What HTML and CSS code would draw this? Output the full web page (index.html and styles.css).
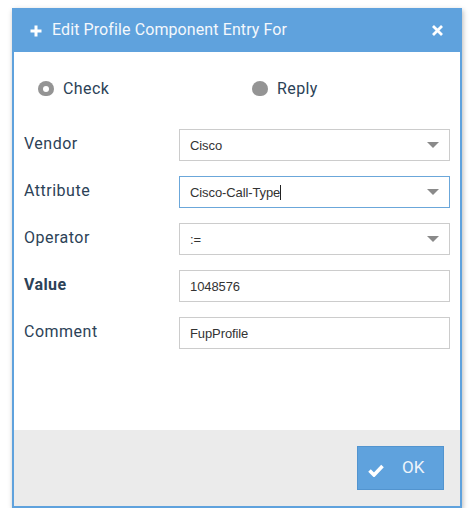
FILE: index.html
```html
<!DOCTYPE html>
<html>
<head>
<meta charset="utf-8">
<link rel="stylesheet" href="styles.css">
</head>
<body>
<div class="dialog">
  <div class="header">
    <svg class="plus" width="12" height="12" viewBox="0 0 12 12"><path d="M6 0.5v11M0.5 6h11" stroke="#fff" stroke-width="3"/></svg>
    <span class="title">Edit Profile Component Entry For</span>
    <svg class="close" width="11" height="11" viewBox="0 0 11 11"><path d="M1 1l9 9M10 1l-9 9" stroke="#fff" stroke-width="2.8"/></svg>
  </div>
  <div class="body">
    <div class="content">
      <div class="radios">
        <label class="radio checked"><span class="dot"></span>Check</label>
        <label class="radio"><span class="dot"></span>Reply</label>
      </div>
      <div class="form">
        <div class="label">Vendor</div>
        <div class="field select"><span>Cisco</span><i class="caret"></i></div>
        <div class="label">Attribute</div>
        <div class="field select focus"><span>Cisco-Call-Type<b class="cursor"></b></span><i class="caret"></i></div>
        <div class="label">Operator</div>
        <div class="field select"><span>:=</span><i class="caret"></i></div>
        <div class="label bold">Value</div>
        <div class="field"><span>1048576</span></div>
        <div class="label">Comment</div>
        <div class="field"><span>FupProfile</span></div>
      </div>
    </div>
    <div class="footer">
      <button class="ok">
        <svg width="16" height="14" viewBox="0 0 16 14"><path d="M1.5 7.5l4.5 4.5 8.5-9" fill="none" stroke="#fff" stroke-width="3.6" stroke-linejoin="miter"/></svg>
        <span>OK</span>
      </button>
    </div>
  </div>
</div>
</body>
</html>
```

FILE: styles.css
```css
html, body { margin: 0; padding: 0; background: #fff; }
body { font-family: Roboto, "Liberation Sans", sans-serif; }

.dialog {
  width: 450px;
  margin: 8px 0 0 12px;
  box-shadow: 1px 2px 5px rgba(0,0,0,0.28);
}

.header {
  height: 44px;
  background: #5fa2dd;
  display: flex;
  align-items: center;
  padding: 0 19px 0 18px;
  color: #fff;
}
.plus { margin-top: 1px; }
.title {
  font-size: 16px;
  margin-left: 10px;
  flex: 1;
  color: #f4f8fc;
  letter-spacing: 0.1px;
  margin-top: -1px;
}

.body {
  border: 2px solid #5fa2dd;
  border-top: 0;
}

.content {
  height: 378px;
  background: #fff;
  padding: 26px 10px 0 10px;
  box-sizing: border-box;
}

.radios {
  display: flex;
  height: 22px;
  align-items: center;
  padding-left: 14px;
}
.radio {
  display: flex;
  align-items: center;
  font-size: 16px;
  color: #2c4257;
  letter-spacing: 0.4px;
  margin-top: -1px;
}
.radio:first-child { width: 214px; }
.dot {
  width: 16px;
  height: 15px;
  border-radius: 8px 8px 7px 7px / 8px 8px 7px 7px;
  background: #949494;
  margin-right: 9px;
  box-sizing: border-box;
  position: relative;
  overflow: hidden;
}
.radio.checked .dot::after {
  content: "";
  position: absolute;
  left: 5px;
  top: 5px;
  width: 6px;
  height: 6px;
  border-radius: 50%;
  background: #fff;
}

.form {
  display: grid;
  grid-template-columns: 155px 271px;
  grid-auto-rows: 32px;
  row-gap: 15px;
  margin-top: 29px;
  align-items: center;
}
.label {
  font-size: 16px;
  color: #2c4257;
  letter-spacing: 0.5px;
  margin-top: -3px;
}
.label.bold { font-weight: bold; letter-spacing: 0.4px; }

.field {
  height: 32px;
  box-sizing: border-box;
  border: 1px solid #cccccc;
  display: flex;
  align-items: center;
  padding: 0 10px;
  font-family: "Liberation Sans", Arial, sans-serif;
  font-size: 13px;
  color: #333;
  background: #fff;
  letter-spacing: -0.1px;
}
.field span { flex: 1; position: relative; }
.field.focus { border-color: #6ba7da; }
.cursor {
  display: inline-block;
  width: 1px;
  height: 15px;
  background: #222;
  vertical-align: -3px;
}
.caret {
  width: 0;
  height: 0;
  border-left: 6px solid transparent;
  border-right: 6px solid transparent;
  border-top: 6px solid #8a8a8a;
  margin-right: 0;
}

.footer {
  height: 76px;
  background: #ebebeb;
  display: flex;
  justify-content: flex-end;
  align-items: center;
  padding: 0 16px;
}
.ok {
  width: 87px;
  height: 44px;
  background: #5fa2dd;
  border: 1px solid #5294cf;
  display: flex;
  align-items: center;
  padding: 0 0 0 10px;
  font-family: Roboto, "Liberation Sans", sans-serif;
  font-size: 17px;
  color: #eef4fa;
  margin: 0;
}
.ok svg { margin-top: 3px; }
.ok span { margin-left: 18px; margin-top: -2px; }
```
